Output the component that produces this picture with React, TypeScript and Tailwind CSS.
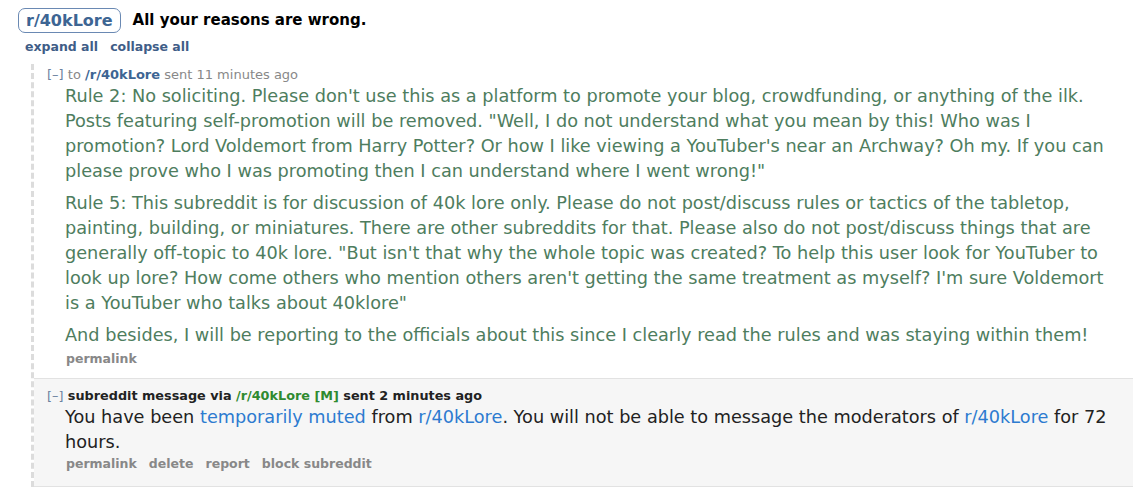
export default function App() {
  return (
    <div className="w-[1133px] h-[498px] overflow-hidden bg-white font-['DejaVu_Sans',Verdana,sans-serif]">
      {/* title row */}
      <div className="flex items-center pl-[18px] pt-[8px]">
        <span className="h-[25px] flex items-center px-[7px] border border-[#6a89b3] rounded-[7px] text-[16px] font-bold text-[#3d6593]">
          r/40kLore
        </span>
        <span className="ml-[12px] text-[15px] font-bold text-black">
          All your reasons are wrong.
        </span>
      </div>

      <div className="flex gap-[12px] pl-[25px] mt-[5px] text-[12.5px] font-bold text-[#3f5d87]">
        <span>expand all</span>
        <span>collapse all</span>
      </div>

      {/* thread */}
      <div className="ml-[31px] mt-[7px] border-l-[3px] border-dashed border-[#dcdcdc]">
        <div className="pl-[13px] pt-[2px] pb-[10px]">
          <div className="text-[13px] leading-[18px] text-[#888]">
            <span className="text-[#6b82a0]">[–]</span> to{" "}
            <span className="font-bold text-[#3d6593]">/r/40kLore</span> sent 11
            minutes ago
          </div>
          <div className="pl-[18px] pr-[12px] text-[17.7px] leading-[25.1px] text-[#4e7d5e]">
            <p>
              Rule 2: No soliciting. Please don't use this as a platform to
              promote your blog, crowdfunding, or anything of the ilk. Posts
              featuring self-promotion will be removed. "Well, I do not
              understand what you mean by this! Who was I promotion? Lord
              Voldemort from Harry Potter? Or how I like viewing a YouTuber's
              near an Archway? Oh my. If you can please prove who I was
              promoting then I can understand where I went wrong!"
            </p>
            <p className="mt-[6.5px]">
              Rule 5: This subreddit is for discussion of 40k lore only. Please
              do not post/discuss rules or tactics of the tabletop, painting,
              building, or miniatures. There are other subreddits for that.
              Please also do not post/discuss things that are generally
              off-topic to 40k lore. "But isn't that why the whole topic was
              created? To help this user look for YouTuber to look up lore? How
              come others who mention others aren't getting the same treatment
              as myself? I'm sure Voldemort is a YouTuber who talks about
              40klore"
            </p>
            <p className="mt-[6.5px]">
              And besides, I will be reporting to the officials about this since
              I clearly read the rules and was staying within them!
            </p>
          </div>
          <div className="pl-[19px] mt-[2px] text-[12.5px] leading-[18px] font-bold text-[#888]">
            permalink
          </div>
        </div>

        <div className="bg-[#f6f6f6] border-y border-[#e2e2e2] pl-[13px] pt-[8px] pb-[13px]">
          <div className="text-[12.8px] leading-[18px] font-bold text-[#222]">
            <span className="font-normal text-[#6b82a0]">[–]</span> subreddit
            message via <span className="text-[#2f8a2f]">/r/40kLore</span>{" "}
            <span className="text-[#2f8a2f]">[M]</span> sent 2 minutes ago
          </div>
          <div className="pl-[18px] pr-[12px] text-[17.7px] leading-[25.1px] text-[#222]">
            <span>You have been </span>
            <span className="text-[#2d7bd0]">temporarily muted</span>
            <span> from </span>
            <span className="text-[#2d7bd0]">r/40kLore</span>
            <span>. You will not be able to message the moderators of </span>
            <span className="text-[#2d7bd0]">r/40kLore</span>
            <span> for 72 hours.</span>
          </div>
          <div className="flex gap-[12px] pl-[19px] text-[12.5px] leading-[18px] font-bold text-[#888]">
            <span>permalink</span>
            <span>delete</span>
            <span>report</span>
            <span>block subreddit</span>
          </div>
        </div>
      </div>
    </div>
  );
}
